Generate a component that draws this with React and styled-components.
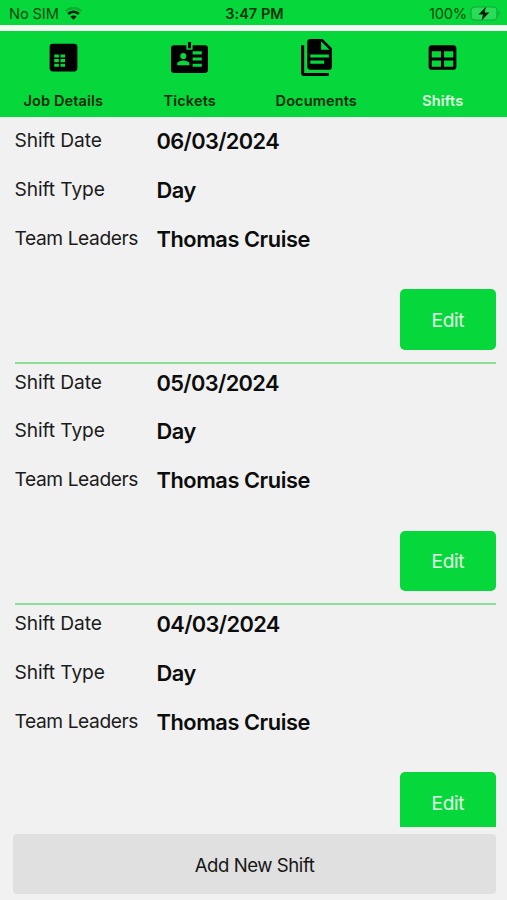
import * as React from "react";
import styled, { createGlobalStyle } from "styled-components";

const GlobalStyle = createGlobalStyle`
*{
	box-sizing: border-box;
}
body{
	margin: 0;
	background: #f1f1f1;
	font-family: Inter, "Liberation Sans", sans-serif;
	color: #0c0c0c;
}
button{
	border: 0;
	padding: 0;
	font-family: inherit;
	color: inherit;
	cursor: pointer;
}
`;

const Screen = styled.div`
	display: flex;
	flex-direction: column;
	width: 507px;
	height: 900px;
	overflow: hidden;
`;

const StatusBar = styled.header`
	display: grid;
	grid-template-columns: 1fr auto 1fr;
	align-items: center;
	flex: none;
	height: 25px;
	padding: 3px 7px 0 9px;
	background: #06d73b;
	color: #05470f;
	font-size: 14.6px;
	line-height: 22px;
`;

const StatusGroup = styled.div`
	display: flex;
	align-items: center;
	justify-content: ${(props) => (props.$end ? "flex-end" : "flex-start")};
	gap: ${(props) => (props.$end ? "3px" : "6px")};
	margin-right: ${(props) => (props.$end ? "-1px" : "0")};
	letter-spacing: ${(props) => (props.$end ? "-0.15px" : "-0.1px")};
	svg{
		margin-bottom: 1px;
	}
`;

const Clock = styled.div`
	color: #04300b;
	font-size: 14.4px;
	font-weight: 600;
	letter-spacing: 0.1px;
`;

const TabBar = styled.nav`
	display: grid;
	grid-template-columns: repeat(4, 1fr);
	flex: none;
	height: 86px;
	margin-top: 6px;
	padding-right: 1px;
	background: #06d73b;
	box-shadow: 0 -6px 0 #f4f8f2;
`;

const Tab = styled.button`
	display: flex;
	flex-direction: column;
	align-items: center;
	padding-top: 7.8px;
	background: none;
	svg{
		width: 37px;
		height: 37px;
		fill: #000;
	}
`;

const TabLabel = styled.span`
	margin-top: 15px;
	font-size: 14.5px;
	font-weight: 600;
	letter-spacing: 0.15px;
	line-height: 20px;
	color: ${(props) => (props.$active ? "#e0ffe2" : "#03290a")};
`;

const ShiftList = styled.main`
	flex: none;
	height: 709.5px;
	padding: 5.2px 11px 0 14.5px;
	overflow: hidden;
`;

const ShiftItem = styled.section`
	display: flex;
	flex-direction: column;
	height: 241.5px;
	border-bottom: 2px solid #8bdf98;
`;

const Fields = styled.dl`
	display: grid;
	grid-template-columns: 142px 1fr;
	row-gap: 12.2px;
	margin: 0;
	line-height: 36.6px;
`;

const Label = styled.dt`
	font-size: 19.2px;
	letter-spacing: ${(props) => (props.$tight ? "-0.42px" : "-0.1px")};
	color: #1c1c1c;
`;

const Value = styled.dd`
	margin: 0;
	padding-top: 1px;
	height: 36.6px;
	font-size: 21.8px;
	font-weight: 600;
	letter-spacing: ${(props) => (props.$tight ? "-0.62px" : "-0.45px")};
`;

const EditButton = styled.button`
	align-self: flex-end;
	width: 96.5px;
	height: 60.5px;
	margin-top: 33px;
	border-radius: 5px;
	background: #06d73b;
	color: #e2ffe6;
	font-size: 19.2px;
	letter-spacing: -0.45px;
`;

const AddButton = styled.button`
	flex: none;
	height: 60px;
	margin: 7.5px 11px 0 13px;
	padding-top: 1px;
	border-radius: 4px;
	background: #e0e0e0;
	color: #161616;
	font-size: 18.6px;
	letter-spacing: -0.45px;
`;

const tabs = [
  {
    name: "Job Details",
    icon: "M19 3H5a2 2 0 0 0-2 2v14a2 2 0 0 0 2 2h14a2 2 0 0 0 2-2V5a2 2 0 0 0-2-2M9 18H6v-2h3v2m0-3H6v-2h3v2m0-3H6v-2h3v2m4 6h-3v-2h3v2m0-3h-3v-2h3v2m0-3h-3v-2h3v2Z",
  },
  {
    name: "Tickets",
    icon: "M22 4H14V7H10V4H2A2 2 0 0 0 0 6V20A2 2 0 0 0 2 22H22A2 2 0 0 0 24 20V6A2 2 0 0 0 22 4M8 9A2 2 0 1 1 6 11A2 2 0 0 1 8 9M12 17H4V16C4 14.67 6.67 14 8 14S12 14.67 12 16V17M20 18H14V16H20V18M20 14H14V12H20V14M20 10H14V8H20V10M13 6H11V2H13V6Z",
  },
  {
    name: "Documents",
    icon: "M15 7H20.5L15 1.5V7M8 0H16L22 6V18A2 2 0 0 1 20 20H8C6.89 20 6 19.1 6 18V2A2 2 0 0 1 8 0M17 16V14H8V16H17M20 12V10H8V12H20M4 4V22H20V24H4A2 2 0 0 1 2 22V4H4Z",
  },
  {
    name: "Shifts",
    active: true,
    icon: "M5 4H19A2 2 0 0 1 21 6V18A2 2 0 0 1 19 20H5A2 2 0 0 1 3 18V6A2 2 0 0 1 5 4M5 8V12H11V8H5M13 8V12H19V8H13M5 14V18H11V14H5M13 14V18H19V14H13Z",
  },
];

const shifts = [
  { date: "06/03/2024", type: "Day", leaders: "Thomas Cruise" },
  { date: "05/03/2024", type: "Day", leaders: "Thomas Cruise" },
  { date: "04/03/2024", type: "Day", leaders: "Thomas Cruise" },
];

const WifiIcon = () => (
  <svg width="17" height="13" viewBox="0 0 17 13" fill="none" strokeWidth="2.3">
    <path d="M.8 4.2a10.9 10.9 0 0 1 15.400 0" stroke="#07ad31" />
    <path d="M3.200 7a7.500 7.500 0 0 1 10.600 0" stroke="#021d06" strokeWidth="2.6" />
    <path d="M8.5 12.8 5.400 9.700a4.400 4.400 0 0 1 6.200 0Z" fill="#021d06" />
  </svg>
);

const BatteryIcon = () => (
  <svg width="31" height="15" viewBox="0 0 31 15">
    <rect x="1" y="1" width="26" height="13" rx="3.6" fill="#2bdc58" stroke="#12a83a" strokeWidth="1.2" />
    <path d="M28.4 5.4c1.6.4 1.6 3.8 0 4.2Z" fill="#12a83a" />
    <path d="M16 .8 8.500 8.500h4.500L11.600 14.400 19.300 6.400h-4.700Z" fill="#021d06" />
  </svg>
);

const Shift = (props) => {
  const { date, type, leaders } = props;
  return (
    <ShiftItem>
      <Fields>
        <Label>Shift Date</Label>
        <Value $tight>{date}</Value>
        <Label>Shift Type</Label>
        <Value>{type}</Value>
        <Label $tight>Team Leaders</Label>
        <Value>{leaders}</Value>
      </Fields>
      <EditButton>Edit</EditButton>
    </ShiftItem>
  );
};

const App = () => {
  return (
    <Screen>
      <GlobalStyle />
      <StatusBar>
        <StatusGroup>
          No SIM
          <WifiIcon />
        </StatusGroup>
        <Clock>3:47 PM</Clock>
        <StatusGroup $end>
          100%
          <BatteryIcon />
        </StatusGroup>
      </StatusBar>
      <TabBar>
        {tabs.map((tab) => (
          <Tab key={tab.name}>
            <svg viewBox="0 0 24 24">
              <path d={tab.icon} />
            </svg>
            <TabLabel $active={tab.active}>{tab.name}</TabLabel>
          </Tab>
        ))}
      </TabBar>
      <ShiftList>
        {shifts.map((shift) => (
          <Shift key={shift.date} {...shift} />
        ))}
      </ShiftList>
      <AddButton>Add New Shift</AddButton>
    </Screen>
  );
};

export default App;
